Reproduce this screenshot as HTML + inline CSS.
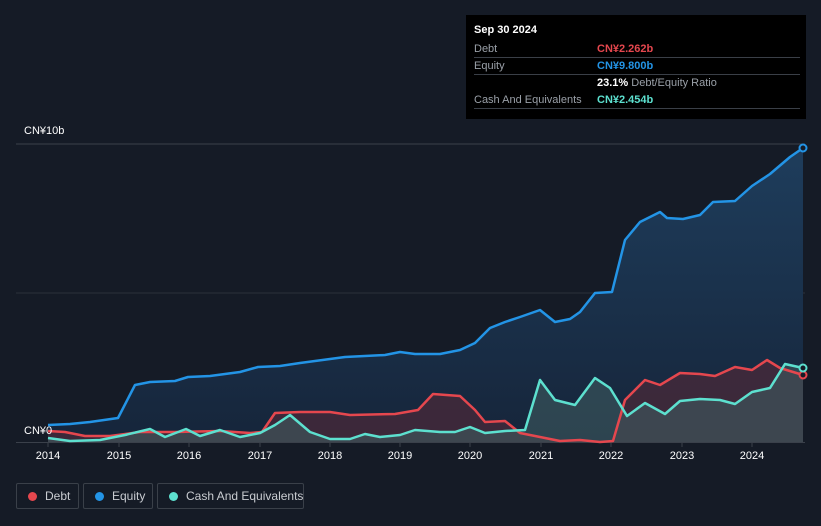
<!DOCTYPE html><html><head><meta charset="utf-8"><style>
body{margin:0;width:821px;height:526px;background:#151b26;font-family:"Liberation Sans",sans-serif;overflow:hidden;position:relative}
.tt{position:absolute;left:466px;top:15px;width:340px;height:104px;background:#000;color:#fff;font-size:11px}
.tt .r{position:absolute;left:8px;right:6px;height:16px;border-bottom:1px solid #3a3f47;color:#9aa0a8;line-height:16px}
.tt .v{position:absolute;left:123px}
.lg{position:absolute;top:483px;height:26px;border:1px solid #3a4049;border-radius:2px;color:#c9ccd1;font-size:12px;line-height:24px;box-sizing:border-box;white-space:nowrap}
.lg i{position:absolute;left:11px;top:8px;width:9px;height:9px;border-radius:50%}
.ax{position:absolute;top:450px;color:#fff;font-size:11px;width:40px;margin-left:-20px;text-align:center}
</style></head><body>
<svg width="821" height="526" style="position:absolute;left:0;top:0">
<defs><linearGradient id="g" x1="0" y1="0" x2="0" y2="1"><stop offset="0" stop-color="#1e3d5c"/><stop offset="1" stop-color="#16253a"/></linearGradient></defs>
<line x1="16" y1="144" x2="805" y2="144" stroke="#3a404a"/>
<line x1="16" y1="293" x2="805" y2="293" stroke="#2a303a"/>
<line x1="16" y1="442.5" x2="805" y2="442.5" stroke="#3a404a"/>
<polygon fill="url(#g)" points="48,442 48,425 70,424 90,422 118,418 135,385 150,382 175,381 188,377 210,376 240,372 258,367 280,366 300,363 330,359 345,357 385,355 400,352 415,354 440,354 460,350 475,343 490,328 505,322 520,317 540,310 555,322 570,319 580,312 595,293 612,292 625,240 640,222 660,212 667,218 683,219 700,215 713,202 735,201 752,186 770,174 790,157 803,148 803,442"/>
<polygon fill="#4a2a3a" opacity="0.75" points="48,442 48,431 65,432 85,436 110,436 140,432 175,432 220,431 250,433 262,432 275,413 300,412 330,412 350,415 395,414 418,410 433,394 460,396 475,410 485,422 505,421 520,433 540,437 560,441 580,440 600,442 613,441 625,400 645,380 660,385 680,373 700,374 715,376 735,367 752,370 767,360 780,368 803,375 803,442"/>
<polygon fill="#3d5a5f" opacity="0.6" points="48,442 48,438 70,441 100,440 125,435 150,429 165,437 186,429 200,436 220,430 240,437 260,433 275,425 290,415 310,432 330,439 350,439 365,434 380,437 400,435 415,430 440,432 455,432 470,427 485,433 505,431 525,430 540,380 555,400 575,405 595,378 610,388 627,416 645,403 665,414 680,401 700,399 720,400 735,404 752,392 770,388 785,364 803,368 803,442"/>
<polyline fill="none" stroke="#2394e6" stroke-width="2.5" stroke-linejoin="round" points="48,425 70,424 90,422 118,418 135,385 150,382 175,381 188,377 210,376 240,372 258,367 280,366 300,363 330,359 345,357 385,355 400,352 415,354 440,354 460,350 475,343 490,328 505,322 520,317 540,310 555,322 570,319 580,312 595,293 612,292 625,240 640,222 660,212 667,218 683,219 700,215 713,202 735,201 752,186 770,174 790,157 803,148"/>
<polyline fill="none" stroke="#e5474e" stroke-width="2.5" stroke-linejoin="round" points="48,431 65,432 85,436 110,436 140,432 175,432 220,431 250,433 262,432 275,413 300,412 330,412 350,415 395,414 418,410 433,394 460,396 475,410 485,422 505,421 520,433 540,437 560,441 580,440 600,442 613,441 625,400 645,380 660,385 680,373 700,374 715,376 735,367 752,370 767,360 780,368 803,375"/>
<polyline fill="none" stroke="#5de0cf" stroke-width="2.5" stroke-linejoin="round" points="48,438 70,441 100,440 125,435 150,429 165,437 186,429 200,436 220,430 240,437 260,433 275,425 290,415 310,432 330,439 350,439 365,434 380,437 400,435 415,430 440,432 455,432 470,427 485,433 505,431 525,430 540,380 555,400 575,405 595,378 610,388 627,416 645,403 665,414 680,401 700,399 720,400 735,404 752,392 770,388 785,364 803,368"/>
<circle cx="803" cy="148" r="3.5" fill="#151b26" stroke="#2394e6" stroke-width="2"/>
<circle cx="803" cy="375" r="3.5" fill="#151b26" stroke="#e5474e" stroke-width="2"/>
<circle cx="803" cy="368" r="3.5" fill="#151b26" stroke="#5de0cf" stroke-width="2"/>
<g stroke="#3a404a"><line x1="48" y1="443" x2="48" y2="447"/><line x1="119" y1="443" x2="119" y2="447"/><line x1="189" y1="443" x2="189" y2="447"/><line x1="260" y1="443" x2="260" y2="447"/><line x1="330" y1="443" x2="330" y2="447"/><line x1="400" y1="443" x2="400" y2="447"/><line x1="470" y1="443" x2="470" y2="447"/><line x1="541" y1="443" x2="541" y2="447"/><line x1="611" y1="443" x2="611" y2="447"/><line x1="682" y1="443" x2="682" y2="447"/><line x1="752" y1="443" x2="752" y2="447"/></g>
</svg>
<div style="position:absolute;left:24px;top:125px;color:#fff;font-size:11px">CN¥10b</div>
<div style="position:absolute;left:24px;top:425px;color:#fff;font-size:11px">CN¥0</div>
<div class="ax" style="left:48px">2014</div><div class="ax" style="left:119px">2015</div><div class="ax" style="left:189px">2016</div><div class="ax" style="left:260px">2017</div><div class="ax" style="left:330px">2018</div><div class="ax" style="left:400px">2019</div><div class="ax" style="left:470px">2020</div><div class="ax" style="left:541px">2021</div><div class="ax" style="left:611px">2022</div><div class="ax" style="left:682px">2023</div><div class="ax" style="left:752px">2024</div>
<div class="tt">
<div style="position:absolute;left:8px;top:9px;font-weight:bold;font-size:11px">Sep 30 2024</div>
<div class="r" style="top:26px">Debt<span class="v" style="color:#e5474e;font-weight:bold">CN¥2.262b</span></div>
<div class="r" style="top:43px">Equity<span class="v" style="color:#2394e6;font-weight:bold">CN¥9.800b</span></div>
<div class="r" style="top:60px;border:none"><span class="v"><b style="color:#fff">23.1%</b> Debt/Equity Ratio</span></div>
<div class="r" style="top:77px">Cash And Equivalents<span class="v" style="color:#5de0cf;font-weight:bold">CN¥2.454b</span></div>
</div>
<div class="lg" style="left:16px;width:63px;padding-left:28px"><i style="background:#e5474e"></i>Debt</div>
<div class="lg" style="left:83px;width:70px;padding-left:28px"><i style="background:#2394e6"></i>Equity</div>
<div class="lg" style="left:157px;width:147px;padding-left:28px"><i style="background:#5de0cf"></i>Cash And Equivalents</div>
</body></html>
